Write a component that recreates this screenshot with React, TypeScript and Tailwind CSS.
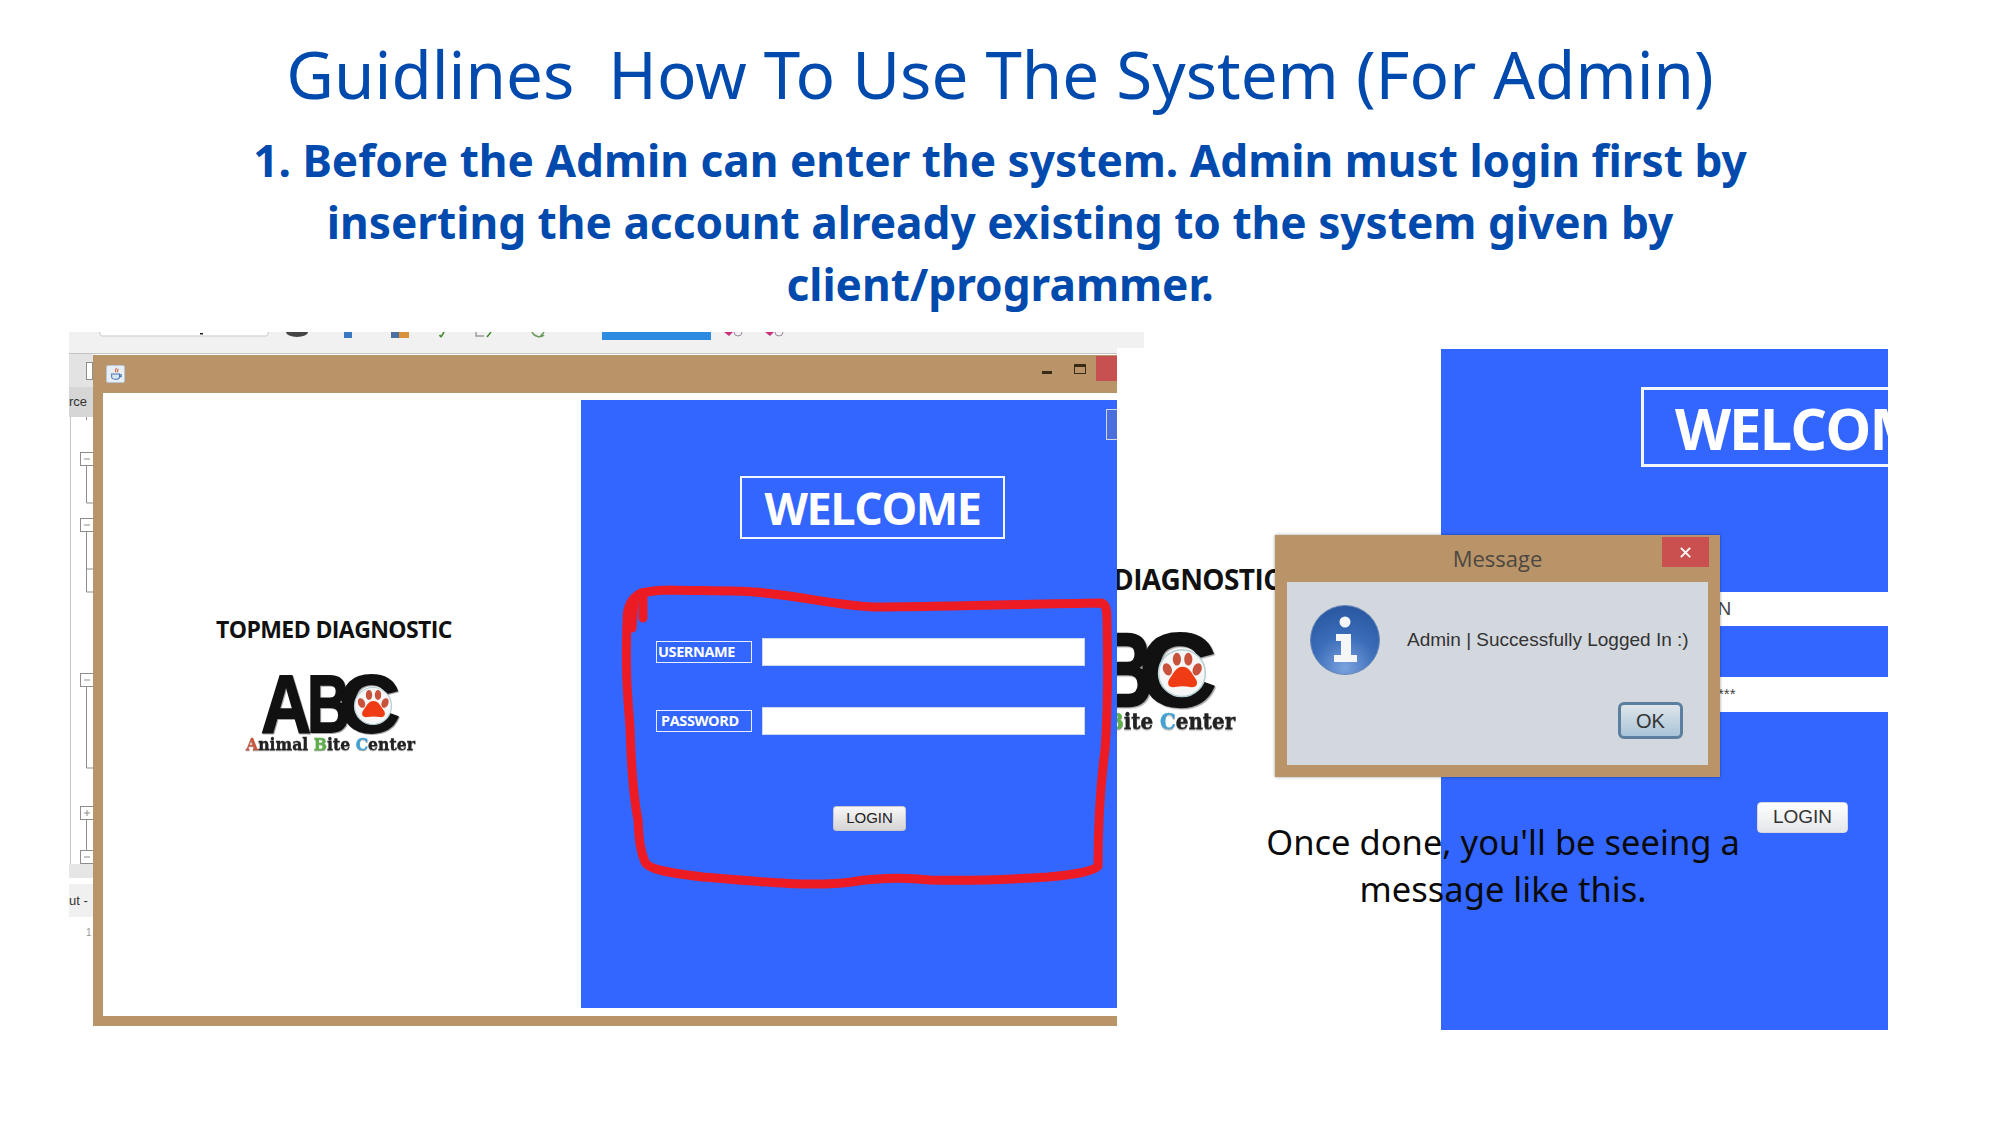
const brown = 'bg-[#b99468]'

const Logo = ({ className }: { className: string }) => {
    return (
        <svg viewBox="0 0 180 90" className={className}>
            <g fontFamily="'Liberation Sans', sans-serif" fontWeight="700" fontSize="82" className="[filter:drop-shadow(1.5px_1.5px_0.5px_rgba(0,0,0,0.35))]" fill="#111111" stroke="#111111" strokeWidth="1.800">
                <text x="21" y="64" textLength="50" lengthAdjust="spacingAndGlyphs">A</text>
                <text x="67" y="64" textLength="43" lengthAdjust="spacingAndGlyphs">B</text>
                <text x="99" y="64" textLength="61" lengthAdjust="spacingAndGlyphs">C</text>
            </g>
            <circle cx="133" cy="38" r="18.500" fill="#f6f6f6" stroke="#b5cfd4" strokeWidth="1.200" />
            <ellipse cx="121.500" cy="35" rx="3.400" ry="5" fill="#c8523c" transform="rotate(-22 121.500 35)" />
            <ellipse cx="129" cy="27" rx="3.200" ry="5" fill="#c8523c" />
            <ellipse cx="138" cy="27" rx="3.200" ry="5" fill="#c8523c" />
            <ellipse cx="145" cy="35" rx="3.400" ry="5" fill="#c8523c" transform="rotate(22 145 35)" />
            <path d="M133.500 33c5 0 7 5 10 9 3 4 1 8-4 7-4-.8-8-.8-12 0-5 1-7-3-4-7 3-4 5-9 10-9z" fill="#f03c14" />
            <text x="6" y="82" fontFamily="'DejaVu Serif', serif" fontWeight="700" fontSize="17" textLength="169" lengthAdjust="spacingAndGlyphs" fill="#222222" stroke="#222222" strokeWidth="0.300" className="[filter:drop-shadow(0.5px_1.5px_0.5px_rgba(0,0,0,0.35))]">
                <tspan fill="#c9573f" stroke="#c9573f">A</tspan>nimal <tspan fill="#5fb04a" stroke="#5fb04a">B</tspan>ite <tspan fill="#3fa3d6" stroke="#3fa3d6">C</tspan>enter
            </text>
        </svg>
    )
}

const InfoIcon = () => {
    return (
        <svg viewBox="0 0 70 70" className="h-[70px] w-[70px] shrink-0">
            <defs>
                <radialGradient id="infoBlue" cx="50%" cy="90%" r="85%">
                    <stop offset="0%" stopColor="#7ba2de" />
                    <stop offset="55%" stopColor="#3a6cb8" />
                    <stop offset="100%" stopColor="#2b5aa3" />
                </radialGradient>
            </defs>
            <circle cx="35" cy="35" r="34.500" fill="url(#infoBlue)" stroke="#6686b8" strokeWidth="1" />
            <circle cx="35" cy="17" r="5.500" fill="#f4f6f8" />
            <path d="M26 29h15v21h6v7H24v-7h7V36h-5z" fill="#f4f6f8" />
        </svg>
    )
}

const LeftStrip = () => {
    return (
        <div className="w-[24px] shrink-0 flex flex-col overflow-hidden">
            <div className="h-[33px] bg-[#e3e3e3] flex items-center pl-[17px]">
                <div className="w-[8px] h-[18px] border border-[#8d8d8d] bg-white" />
            </div>
            <div className="h-[30px] bg-[#d6d6d6] flex items-center font-['Liberation_Sans',sans-serif] text-[13px] text-[#333333]">rce</div>
            <svg viewBox="0 0 24 447" className="w-[24px] h-[447px] block bg-white">
                <path d="M1.500 0V447" stroke="#c4c4c4" fill="none" />
                <g stroke="#8d8d8d" fill="none">
                    <path d="M17.500 0V3M17.500 48V86H24M17.500 114V175H24M17.500 152H24M17.500 269V351H24M17.500 402V433" />
                    <rect x="11.500" y="35.500" width="13" height="13" fill="#ffffff" />
                    <rect x="11.500" y="101.500" width="13" height="13" fill="#ffffff" />
                    <rect x="11.500" y="256.500" width="13" height="13" fill="#ffffff" />
                    <rect x="11.500" y="389.500" width="13" height="13" fill="#ffffff" />
                    <rect x="11.500" y="433.500" width="13" height="13" fill="#ffffff" />
                    <path d="M15 42h6M15 108h6M15 263h6M15 396h6M18 393v6M15 440h6" />
                </g>
            </svg>
            <div className="h-[14px] bg-[#e6e6e6]" />
            <div className="h-[6px] bg-white" />
            <div className="h-[33px] bg-[#f0f0f0] flex items-center font-['Liberation_Sans',sans-serif] text-[13px] text-[#333333]">ut -</div>
            <div className="pl-[17px] pt-[8px] font-['Liberation_Sans',sans-serif] text-[10px] text-[#999999]">1</div>
        </div>
    )
}

const ToolbarBits = () => {
    return (
        <svg viewBox="0 0 1075 16" className="w-[1075px] h-[16px] block bg-[#f1f1f1]">
            <rect x="31" y="-8" width="168" height="12" rx="2" fill="#ffffff" stroke="#c9c9c9" />
            <rect x="131" y="1" width="3" height="1.500" fill="#222222" />
            <ellipse cx="228" cy="0" rx="11" ry="5" fill="#444444" />
            <rect x="275" y="0" width="8" height="6" fill="#3a78c2" />
            <rect x="322" y="0" width="8" height="6" fill="#4b6fa0" />
            <rect x="330" y="0" width="10" height="6" fill="#d9923a" />
            <path d="M372 5l3-5M372 5l-1.500-2" stroke="#3d8a2e" strokeWidth="1.500" fill="none" />
            <path d="M407 0v4h8" stroke="#9a9a9a" strokeWidth="1.500" fill="none" />
            <path d="M418 5l4-5" stroke="#3d8a2e" strokeWidth="1.500" fill="none" />
            <path d="M463 0c2 5 9 6 12 3M471 5l4-5" stroke="#6d9a5d" strokeWidth="1.500" fill="none" />
            <rect x="533" y="0" width="109" height="8" fill="#2a8be0" />
            <path d="M655 0l5 4 4-4z" fill="#c8327a" />
            <circle cx="669" cy="0" r="4" fill="none" stroke="#9c8aa0" />
            <path d="M696 0l5 4 4-4z" fill="#c8327a" />
            <circle cx="710" cy="0" r="4" fill="none" stroke="#9c8aa0" />
        </svg>
    )
}

const LoginPanel = () => {
    return (
        <div className="relative flex-1 mt-[7px] mb-[8px] bg-[#3366ff]">
            <div className="absolute right-0 top-[9px] w-[11px] h-[31px] border border-r-0 border-[#cfd6e4] bg-[#4a6fdc]" />
            <div className="ml-[159px] mt-[76px] w-[265px] h-[63px] border-2 border-[#f2f7ff] flex items-center justify-center font-['Open_Sans',sans-serif] font-bold text-[45px] tracking-[-1.500px] text-white">
                WELCOME
            </div>
            <div className="flex items-center gap-[10px] ml-[75px] mt-[99px]">
                <div className="w-[96px] h-[22px] border border-[#e6eeff] flex items-center pl-[1px] font-['Open_Sans',sans-serif] font-bold text-[14.500px] tracking-[-0.400px] text-white">USERNAME</div>
                <div className="w-[323px] h-[28px] bg-white border border-[#cdd8f0]" />
            </div>
            <div className="flex items-center gap-[10px] ml-[75px] mt-[41px]">
                <div className="w-[96px] h-[22px] border border-[#e6eeff] flex items-center pl-[4px] font-['Open_Sans',sans-serif] font-bold text-[14.500px] tracking-[-0.400px] text-white">PASSWORD</div>
                <div className="w-[323px] h-[28px] bg-white border border-[#cdd8f0]" />
            </div>
            <button className="block ml-[252px] mt-[71px] w-[73px] h-[25px] rounded-[3px] bg-gradient-to-b from-[#f8f8f8] to-[#d4d4d4] border border-[#c8c8c8] font-['Liberation_Sans',sans-serif] text-[15px] text-[#222222]">LOGIN</button>
            <svg viewBox="0 0 536 608" className="absolute inset-0 w-full h-full overflow-visible pointer-events-none" fill="none" stroke="#ed1c24" strokeWidth="9" strokeLinecap="round" strokeLinejoin="round">
                <path d="M88 190C120 191 160 190 184 193C230 198 260 206 294 207C350 207 450 204 520 203C526 204 526 212 526 222C527 270 527 310 524 350C518 395 517 430 517 466C512 472 490 475 467 477C420 480 390 481 349 480C320 477 295 478 270 482C232 487 180 482 122 477C90 473 68 470 64 462C59 450 58 440 57 420C52 395 50 360 49 327C47 300 44 275 46 220C46 208 50 198 60 193C70 191 80 190 88 190" />
                <path d="M62 193L62 218M53 200L51 228" />
            </svg>
        </div>
    )
}

const LeftShot = () => {
    return (
        <div className="absolute left-[69px] top-[332px] w-[1075px] flex flex-col">
            <ToolbarBits />
            <div className="w-[1048px] h-[6px] bg-[#f1f1f1] border-b border-[#c4c4c4]" />
            <div className="flex w-[1048px]">
                <LeftStrip />
                <div className={`w-[1024px] h-[671px] mt-[1px] ${brown} flex flex-col pl-[10px] pb-[10px]`}>
                    <div className="h-[38px] shrink-0 flex items-start justify-between">
                        <div className="mt-[10px] ml-[3px] w-[19px] h-[18px] bg-[#e8eef6] border border-[#b7c4d6] rounded-[2px] flex items-center justify-center">
                            <svg viewBox="0 0 16 16" className="w-[14px] h-[14px]">
                                <path d="M8 1c1 2-2 3 0 5M10 2c1 2-1 3 0 4" stroke="#d6552b" strokeWidth="1.200" fill="none" />
                                <path d="M3 8h9v3c0 2-2 3-4.500 3S3 13 3 11zM12 9h2v2h-2" stroke="#4a76b0" strokeWidth="1.200" fill="#dbe6f3" />
                            </svg>
                        </div>
                        <div className="flex items-start">
                            <div className="w-[10px] h-[3px] bg-[#3a2a18] mt-[16px] mr-[22px]" />
                            <div className="w-[12px] h-[10px] border border-[#3a2a18] border-t-[3px] mt-[9px] mr-[10px]" />
                            <div className="w-[21px] h-[25px] mt-[1px] bg-[#c75050]" />
                        </div>
                    </div>
                    <div className="flex flex-1 bg-white">
                        <div className="w-[478px] shrink-0 overflow-hidden">
                            <div className="ml-[113px] mt-[221px] font-['Open_Sans',sans-serif] font-bold text-[23px] tracking-[-0.600px] leading-[30px] text-[#111111] whitespace-nowrap">TOPMED DIAGNOSTIC</div>
                            <Logo className="ml-[137px] mt-[24px] w-[180px] h-[90px]" />
                        </div>
                        <LoginPanel />
                    </div>
                </div>
            </div>
        </div>
    )
}

const MiddleShot = () => {
    return (
        <div className="absolute left-[1117px] top-[540px] w-[170px] h-[220px] overflow-hidden">
            <div className="-ml-[4px] mt-[23px] font-['Open_Sans',sans-serif] font-bold text-[28px] tracking-[-0.600px] leading-[32px] text-[#111111] whitespace-nowrap">DIAGNOSTIC</div>
            <div className="absolute left-[-104px] top-[85px] w-[229px] h-[114px]">
                <Logo className="w-full h-full" />
            </div>
        </div>
    )
}

const RightShot = () => {
    return (
        <div className="absolute left-[1441px] top-[349px] w-[447px] h-[681px] bg-[#3366ff] overflow-hidden">
            <div className="ml-[200px] mt-[38px] w-[300px] h-[80px] border-[3px] border-[#f2f7ff] flex items-center pl-[31px] font-['Open_Sans',sans-serif] font-bold text-[58px] tracking-[-2px] text-white whitespace-nowrap">
                WELCOME
            </div>
            <div className="ml-[200px] mt-[125px] h-[34px] bg-white flex items-center pl-[29px] font-['Liberation_Sans',sans-serif] text-[19px] text-[#444444]">ADMIN</div>
            <div className="ml-[200px] mt-[51px] h-[35px] bg-white flex items-center pl-[42px] font-['Liberation_Sans',sans-serif] text-[15px] text-[#444444]">*********</div>
            <button className="block ml-[316px] mt-[90px] w-[91px] h-[31px] rounded-[4px] bg-gradient-to-b from-white to-[#e4e6ea] border border-[#d5d8e0] font-['Liberation_Sans',sans-serif] text-[19px] text-[#333333]">LOGIN</button>
        </div>
    )
}

const MessageDialog = () => {
    return (
        <div className={`absolute left-[1275px] top-[535px] w-[445px] h-[242px] ${brown} flex flex-col px-[12px] pb-[12px] shadow-[0_0_3px_rgba(0,0,0,0.4)]`}>
            <div className="relative h-[47px] shrink-0 flex items-center justify-center font-['Open_Sans',sans-serif] text-[22px] text-[#4c4740]">
                Message
                <div className="absolute -right-[1px] top-[2px] w-[47px] h-[30px] bg-[#c9504f] flex items-center justify-center">
                    <svg viewBox="0 0 14 14" className="w-[13px] h-[13px]">
                        <path d="M2 2l10 10M12 2L2 12" stroke="#f5f5f5" strokeWidth="2.200" />
                    </svg>
                </div>
            </div>
            <div className="flex-1 bg-[#d3d7de] flex flex-col">
                <div className="flex items-center mt-[23px] ml-[23px] gap-[27px]">
                    <InfoIcon />
                    <span className="font-['Liberation_Sans',sans-serif] text-[19px] text-[#333333] whitespace-nowrap">Admin | Successfully Logged In :)</span>
                </div>
                <div className="flex justify-end mt-[27px] mr-[25px]">
                    <button className="w-[65px] h-[37px] rounded-[6px] border-[3px] border-[#5c7f9f] bg-gradient-to-b from-[#dfe5ea] to-[#a9c4d8] font-['Liberation_Sans',sans-serif] text-[20px] text-[#333333]">OK</button>
                </div>
            </div>
        </div>
    )
}

const App = () => {
    return (
        <div className="relative w-[2000px] h-[1125px] bg-white overflow-hidden">
            <div className="flex flex-col items-center pt-[30px] text-[#004aad] font-['Noto_Sans',sans-serif]">
                <h1 className="text-[65.500px] leading-[88px] whitespace-pre">Guidlines  How To Use The System (For Admin)</h1>
                <h2 className="mt-[11px] text-center font-bold text-[44.200px] leading-[62px]">
                    1. Before the Admin can enter the system. Admin must login first by<br />
                    inserting the account already existing to the system given by<br />
                    client/programmer.
                </h2>
            </div>
            <LeftShot />
            <MiddleShot />
            <RightShot />
            <MessageDialog />
            <p className="absolute left-[1203px] top-[818px] w-[600px] text-center font-['Noto_Sans',sans-serif] text-[34.500px] leading-[47px] text-[#0a0a0a]">
                Once done, you'll be seeing a<br />message like this.
            </p>
        </div>
    )
}

export default App
